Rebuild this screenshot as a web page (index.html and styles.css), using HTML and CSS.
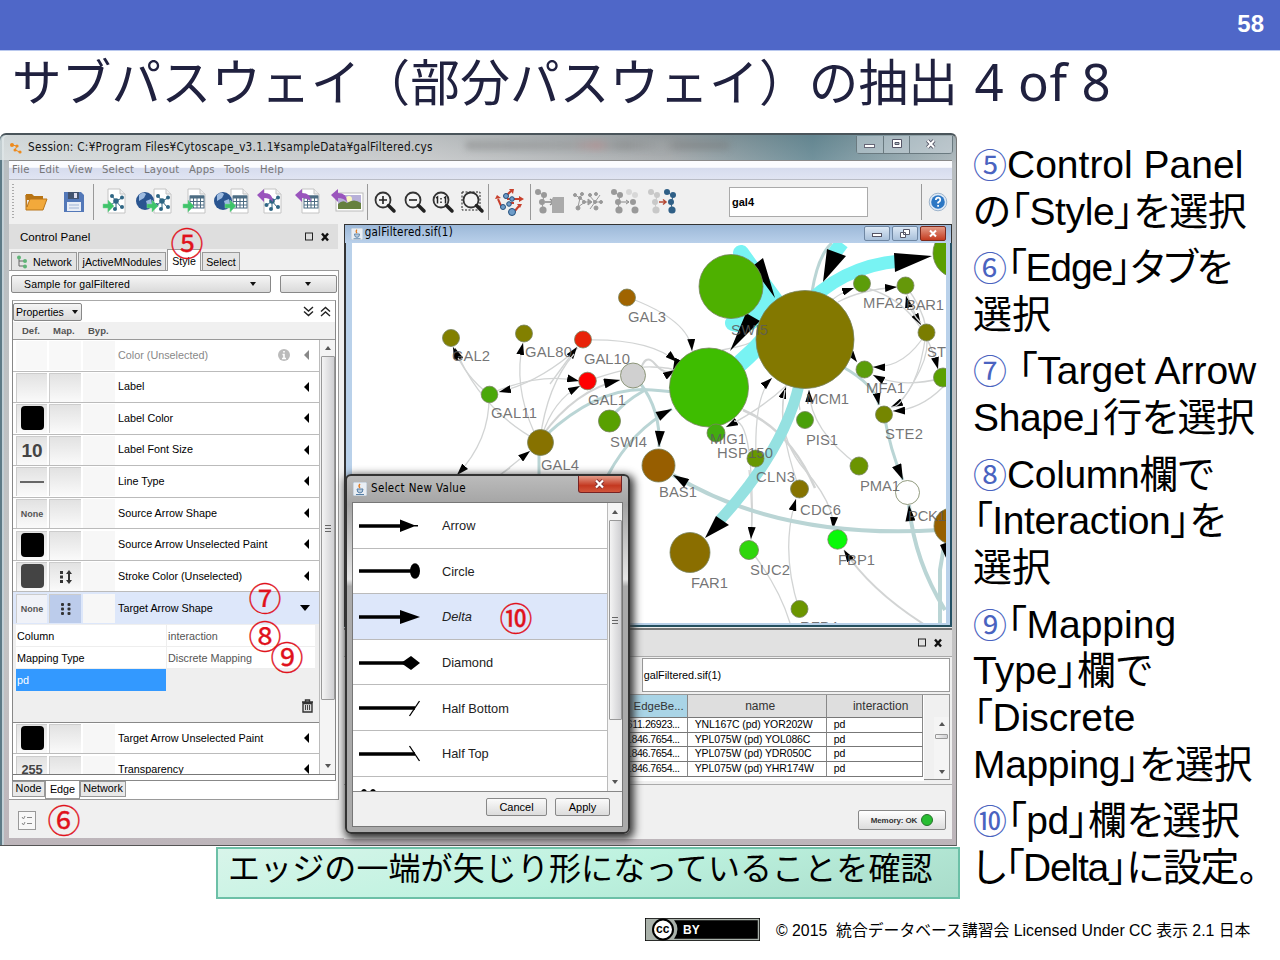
FILE: index.html
```html
<!DOCTYPE html>
<html lang="ja">
<head>
<meta charset="utf-8">
<title>サブパスウェイの抽出</title>
<link rel="stylesheet" href="styles.css">
</head>
<body>
<header class="band">58</header>
<h1 class="title">サブパスウェイ（部分パスウェイ）の抽出 <span class="latin">4 of 8</span></h1>
<main class="content">
<div class="left">
<section class="app">
  <div class="titlebar">
    <svg class="logo" width="14" height="14" viewBox="0 0 14 14"><g fill="#ee8a1c"><circle cx="3" cy="4" r="2"/><circle cx="8" cy="5" r="1.6"/><circle cx="6" cy="9" r="1.5"/><circle cx="11" cy="11" r="1.6"/></g><path d="M3 4l5 1-2 4 5 2" stroke="#ee8a1c" fill="none"/></svg>
    <span class="session">Session: C:¥Program Files¥Cytoscape_v3.1.1¥sampleData¥galFiltered.cys</span>
    <span class="ghost"></span>
    <div class="wbtns"><i><svg width="14" height="12"><rect x="1.500" y="6.500" width="10" height="3" fill="#fff" stroke="#667"/></svg></i><i><svg width="12" height="12"><path d="M1.500 1.500h9v8h-9zM4 4.500h4v2H4z" fill="#fff" stroke="#556" fill-rule="evenodd"/></svg></i><i><svg width="12" height="12"><path d="M2.500 2.500l6.500 7M9 2.500l-6.500 7" stroke="#556" stroke-width="4"/><path d="M2.500 2.500l6.500 7M9 2.500l-6.500 7" stroke="#fff" stroke-width="2"/></svg></i></div>
  </div>
  <nav class="menu"><span>File</span><span>Edit</span><span>View</span><span>Select</span><span>Layout</span><span>Apps</span><span>Tools</span><span>Help</span></nav>
  <svg class="defs" width="0" height="0">
    <defs>
      <g id="page"><path d="M8 1h12l5 5v19H8z" fill="#fff" stroke="#c4c4c4"/><path d="M20 1v5h5" fill="#eee" stroke="#c4c4c4"/></g>
      <g id="net"><path d="M16 13L12 8M16 13l6-3M16 13l-5 4M16 13l5 6M16 13v7" stroke="#2f6684"/><g fill="#2f6684"><circle cx="16" cy="13" r="2.800"/><circle cx="12" cy="8" r="2"/><circle cx="22" cy="9.500" r="2"/><circle cx="10.500" cy="17" r="2"/><circle cx="22" cy="19" r="2"/><circle cx="15" cy="21" r="2"/></g></g>
      <g id="grid"><rect x="10" y="8" width="14" height="12" fill="#fff" stroke="#4d6d83"/><path d="M10 9h14" stroke="#4d6d83" stroke-width="3"/><path d="M10 13.500h14M10 17h14M13.500 9v11M17 9v11M20.500 9v11" stroke="#4d6d83"/></g>
      <g id="garrow"><path d="M3 16h5v-4l6 6-6 6v-4H3z" fill="#3fc46a" stroke="#7fd79a" stroke-width=".5"/></g>
      <g id="globe"><circle cx="9" cy="12" r="9" fill="#2a5590"/><path d="M3 6q4-4 7-1l-2 4-5 3zM10 12l5-2 1 5-4 4z" fill="#9dbbe0"/></g>
      <g id="parrow"><path d="M1 7l7-6v4q9 0 9 9-3-4-9-4v4z" fill="#9a55bd"/></g>
      <g id="lens"><circle cx="10" cy="10" r="7.500" fill="#f4f4f4" stroke="#333" stroke-width="1.800"/><path d="M15.500 15.500l5.500 5.500" stroke="#222" stroke-width="3.500" stroke-linecap="round"/></g>
      <g id="tree"><path d="M4 4l6 4-2 8 2 7" stroke="currentColor" fill="none"/><g fill="currentColor"><circle cx="4" cy="4" r="3"/><circle cx="10" cy="7" r="3"/><circle cx="8" cy="14" r="3"/><circle cx="9" cy="22" r="3.600"/></g></g>
      <g id="java"><rect width="14" height="14" rx="1" fill="#e9eef4" stroke="#9ab" stroke-width=".7"/><path d="M4 7h6q0 4-3 4T4 7zM3 12.500h8" stroke="#567fa6" fill="#b9cbdc"/><path d="M7 6q-2-2 0-4" stroke="#e2791c" fill="none" stroke-width="1.300"/></g>
      <marker id="ar" viewBox="0 0 12 8" refX="12" refY="4" markerWidth="12" markerHeight="8" markerUnits="userSpaceOnUse" orient="auto"><path d="M0 0l12 4-12 4z"/></marker>
      <marker id="arL" viewBox="0 0 16 10" refX="16" refY="5" markerWidth="17" markerHeight="10" markerUnits="userSpaceOnUse" orient="auto"><path d="M0 0l16 5-16 5z"/></marker>
    </defs>
  </svg>
  <div class="toolbar">
    <b class="grip"></b>
    <b><svg width="24" height="22"><path d="M2 3h6l2 2h9v4H2z" fill="#b87413"/><path d="M2 19V4l1 12L6 8h17l-4 11z" fill="#f2a93b" stroke="#b9761c"/></svg></b>
    <b class="sep"><svg width="24" height="24"><path d="M2 2h17l3 3v17H2z" fill="#5378b8"/><rect x="6" y="2" width="11" height="7" fill="#42536f"/><rect x="12" y="3" width="3" height="5" fill="#dde"/><rect x="5" y="12" width="14" height="9" fill="#e8edf6"/><path d="M7 15h10M7 18h10" stroke="#9fb3d4"/></svg></b>
    <b><svg width="28" height="28"><use href="#page"/><use href="#net"/><use href="#garrow"/></svg></b>
    <b><svg width="37" height="28"><g transform="translate(10)"><use href="#page"/><use href="#net"/></g><use href="#globe" y="1"/><use href="#garrow" x="8"/></svg></b>
    <b><svg width="28" height="28"><use href="#page"/><use href="#grid"/><use href="#garrow"/></svg></b>
    <b><svg width="36" height="28"><g transform="translate(9)"><use href="#page"/><use href="#grid"/></g><use href="#globe" y="1"/><use href="#garrow" x="8"/></svg></b>
    <b><svg width="28" height="28"><use href="#page"/><use href="#net"/><use href="#parrow"/></svg></b>
    <b><svg width="28" height="28"><use href="#page"/><use href="#grid"/><use href="#parrow"/></svg></b>
    <b class="sep"><svg width="34" height="28"><rect x="6" y="5" width="27" height="18" fill="#fff" stroke="#bbb"/><rect x="8" y="7" width="23" height="14" fill="#b7b0d8"/><circle cx="19" cy="11" r="3" fill="#fbf8c0"/><path d="M8 16q5-5 9-1 7-5 14 0v6H8z" fill="#66803f"/><use href="#parrow"/></svg></b>
    <b><svg width="24" height="24"><use href="#lens"/><path d="M6 10h8M10 6v8" stroke="#222" stroke-width="1.600"/></svg></b>
    <b><svg width="24" height="24"><use href="#lens"/><path d="M6 10h8" stroke="#222" stroke-width="1.600"/></svg></b>
    <b><svg width="24" height="24"><use href="#lens"/><path d="M5 8l1.500-1v6.500M13 8l1.500-1v6.500M10 8v1.500M10 11.500V13" stroke="#222" stroke-width="1.500" fill="none"/></svg></b>
    <b class="sep"><svg width="26" height="24"><rect x="2" y="2" width="18" height="18" fill="none" stroke="#222" stroke-dasharray="2 1.500"/><use href="#lens" x="1"/></svg></b>
    <b class="sep"><svg width="30" height="30"><g stroke="#c8402c" stroke-width="2" fill="#c8402c"><path d="M11 9l5-5M12 12h13M7 21L3 12M19 25l5-6M13 16h6"/><path d="M14 2l5 0-1 5zM24 9l5 3-5 3zM0 12l2-4 4 3zM22 17l5 0-2 4z" stroke="none"/></g><g fill="#6e9cc8" stroke="#24507d"><circle cx="11" cy="9" r="2.500"/><circle cx="17" cy="12" r="2.300"/><circle cx="8" cy="20" r="2.500"/><circle cx="14" cy="17" r="2.300"/><circle cx="17" cy="25" r="3.500"/></g></svg></b>
    <b class="dim"><svg width="32" height="28"><use href="#tree"/><path d="M11 14h8M16 11l4 3-4 3" stroke="#888" fill="none" stroke-width="1.500"/><path d="M19 9h11v16H18V11z" fill="#aaa"/></svg></b>
    <b class="dim"><svg width="30" height="24" fill="#999" stroke="#999"><path d="M2 5l5 3-2 9M9 4L7 8l5 4-7 5M16 5l6 7 5-7M17 19l5-7h5M11 12h7" fill="none"/><path d="M15 9l4 3-4 3z"/><circle cx="2" cy="5" r="1.500"/><circle cx="9" cy="4" r="1.500"/><circle cx="7" cy="8" r="1.500"/><circle cx="5" cy="18" r="2"/><circle cx="11" cy="12" r="1.500"/><circle cx="22" cy="12" r="1.500"/><circle cx="17" cy="5" r="1.500"/><circle cx="23" cy="4" r="1.500"/><circle cx="23" cy="18" r="2"/><circle cx="28" cy="12" r="1.500"/></svg></b>
    <b class="dim"><svg width="30" height="28"><use href="#tree"/><path d="M11 14h7M16 12l3 2-3 2" stroke="#888" fill="none"/><g opacity=".45"><circle cx="19" cy="4" r="3" fill="#bbb"/><circle cx="25" cy="7" r="3" fill="#bbb"/></g><g fill="#999"><circle cx="23" cy="14" r="3"/><circle cx="25" cy="22" r="3.500"/></g></svg></b>
    <b class="dim"><svg width="30" height="28"><use href="#tree" opacity=".45"/><g transform="translate(16)" color="#2f5f86"><use href="#tree"/></g><path d="M12 14h6M16 11.500l3 2.500-3 2.500" stroke="#b54a34" fill="none" stroke-width="1.500"/></svg></b>
    <b></b>
    <div class="search">gal4</div>
    <b class="sep"></b>
    <b><svg width="20" height="20"><circle cx="10" cy="10" r="8.800" fill="#dfeaf6" stroke="#9db4cc"/><circle cx="10" cy="10" r="6.800" fill="#2c77c4"/><path d="M7.800 8q.2-2.300 2.300-2.300T12.300 8q0 1.300-2.200 2.600v1M10.100 13v1.700" stroke="#fff" stroke-width="1.700" fill="none"/></svg></b>
  </div>
  <div class="body">
    <aside class="cp">
      <div class="cphead"><span>Control Panel</span><em><svg width="26" height="10"><rect x="1.500" y="1" width="7" height="7" fill="none" stroke="#222"/><path d="M18 1.500l6 7M24 1.500l-6 7" stroke="#111" stroke-width="2.400"/></svg></em></div>
      <div class="tabs"><span class="t1"><svg width="13" height="14"><path d="M3 2v9h6M3 6h6" stroke="#666" fill="none"/><g fill="#5fb477"><circle cx="3" cy="2.500" r="2"/><circle cx="9" cy="6" r="2"/><circle cx="9" cy="11.500" r="2"/></g></svg>Network</span><span class="t2">jActiveMNodules</span><span class="t3">Style</span><span class="t4">Select</span></div>
      <div class="cpbody">
        <div class="combos"><span class="combo c1">Sample for galFiltered<i></i></span><span class="combo c2"><i></i></span></div>
        <div class="box">
          <div class="props"><span class="combo c3">Properties<i></i></span><svg width="28" height="12"><path d="M1 1l4.500 4L10 1M1 5.500l4.500 4L10 5.500M18 5.500l4.500-4 4.500 4M18 10l4.500-4 4.500 4" stroke="#222" stroke-width="1.400" fill="none"/></svg></div>
          <div class="cols"><span>Def.</span><span>Map.</span><span>Byp.</span></div>
          <div class="listwrap">
            <div class="list">
              <div class="row off"><b></b><b></b><b></b><span>Color (Unselected)</span><svg width="14" height="14"><circle cx="7" cy="7" r="6" fill="#bbb"/><path d="M7 3v1.600M5.500 6.500H7V10M5 10.500h4" stroke="#fff" stroke-width="1.600" fill="none"/></svg><i></i></div>
              <div class="row"><b></b><b></b><b></b><span>Label</span><i></i></div>
              <div class="row"><b><u></u></b><b></b><b></b><span>Label Color</span><i></i></div>
              <div class="row"><b class="num">10</b><b></b><b></b><span>Label Font Size</span><i></i></div>
              <div class="row"><b><s></s></b><b></b><b></b><span>Line Type</span><i></i></div>
              <div class="row"><b class="none">None</b><b></b><b></b><span>Source Arrow Shape</span><i></i></div>
              <div class="row"><b><u></u></b><b></b><b></b><span>Source Arrow Unselected Paint</span><i></i></div>
              <div class="row"><b><u class="grey"></u></b><b><svg width="16" height="14" fill="#333"><rect x="2" y="1" width="3" height="3"/><rect x="2" y="5.500" width="3" height="3"/><rect x="2" y="10" width="3" height="3"/><path d="M8 4l3-4 3 4h-2v6h2l-3 4-3-4h2V4z"/></svg></b><b></b><span>Stroke Color (Unselected)</span><i></i></div>
              <div class="row sel"><b class="none">None</b><b><svg width="12" height="14" fill="#333"><rect x="1" y="1" width="3" height="3" rx="1"/><rect x="1" y="5.500" width="3" height="3" rx="1"/><rect x="1" y="10" width="3" height="3" rx="1"/><rect x="7.500" y="1" width="3" height="3" rx="1"/><rect x="7.500" y="5.500" width="3" height="3" rx="1"/><rect x="7.500" y="10" width="3" height="3" rx="1"/></svg></b><b></b><span>Target Arrow Shape</span><i></i></div>
              <div class="mapping">
                <div class="mrow"><span>Column</span><span>interaction</span></div>
                <div class="mrow"><span>Mapping Type</span><span>Discrete Mapping</span></div>
                <div class="pd">pd</div>
                <svg class="trash" width="13" height="14"><path d="M1 3h11M4.500 3V1h4v2M2 4.500h9V13H2z" stroke="#333" fill="#ddd" stroke-width="1.400"/><path d="M4.500 6v5M6.500 6v5M8.500 6v5" stroke="#444"/></svg>
              </div>
              <div class="row"><b><u></u></b><b></b><b></b><span>Target Arrow Unselected Paint</span><i></i></div>
              <div class="row"><b class="num n2">255</b><b></b><b></b><span>Transparency</span><i></i></div>
            </div>
            <div class="sb sb1"><i class="up"></i><div></div><i class="dn"></i></div>
          </div>
        </div>
        <div class="btabs"><span>Node</span><span class="on">Edge</span><span>Network</span></div>
      </div>
      <div class="cpfoot"><svg width="19" height="20"><rect x=".5" y=".5" width="17" height="18" fill="#f8f8f8" stroke="#999"/><path d="M4 6l1.500 2L7 5M9 6.500h5M4 12l1.500 2L7 11M9 12.500h5" stroke="#888" fill="none"/></svg></div>
    </aside>
    <div class="right">
      <div class="nethead"><svg width="12" height="12" viewBox="0 0 14 14"><use href="#java"/></svg><span>galFiltered.sif(1)</span>
        <div class="nb"><i><svg width="12" height="10"><rect x="1.500" y="5.500" width="9" height="3" fill="#fff" stroke="#556"/></svg></i><i><svg width="12" height="11"><path d="M4.500 1.500h6v5h-6zM1.500 4.500h5v5h-5z" fill="#fff" stroke="#556"/></svg></i><i class="red"><svg width="10" height="9"><path d="M2 1.500l6 6M8 1.500l-6 6" stroke="#fff" stroke-width="2"/></svg></i></div></div>
      <div class="netframe">
      <svg class="network" width="594" height="380" viewBox="352 243 594 380">
        <g fill="none" stroke="#d2d4d4" stroke-width="1.300">
          <path d="M540 442Q480 410 455 348" marker-end="url(#ar)"/>
          <path d="M489 394Q466 378 453 347" marker-end="url(#ar)"/>
          <path d="M489 396Q490 440 457 475" marker-end="url(#ar)"/>
          <path d="M489 394Q540 372 579 381" marker-end="url(#ar)"/>
          <path d="M578 348Q540 382 499 392" marker-end="url(#ar)"/>
          <path d="M550 384Q566 362 577 347" marker-end="url(#ar)"/>
          <path d="M534 432Q513 385 523 343" marker-end="url(#ar)"/>
          <path d="M540 440Q547 385 574 354"/>
          <path d="M542 436Q553 400 580 386" marker-end="url(#ar)"/>
          <path d="M542 436Q575 390 620 380" marker-end="url(#arL)" stroke-width="2"/>
          <path d="M500 475L530 451" marker-end="url(#ar)"/>
          <path d="M478 490L510 468"/>
          <path d="M583 340Q650 338 677 362" marker-end="url(#ar)"/>
          <path d="M588 381Q630 366 652 367T673 370" marker-end="url(#ar)"/>
          <path d="M627 297Q690 320 692 351" marker-end="url(#ar)"/>
          <path d="M640 372q5-20 15-8t20 6" marker-end="url(#ar)" stroke-width="2"/>
          <path d="M722 350Q750 345 757 339"/>
          <path d="M862 287Q920 300 938 369" marker-end="url(#ar)"/>
          <path d="M905 288Q912 310 921 325" marker-end="url(#ar)"/>
          <path d="M921 323Q910 312 906 296" marker-end="url(#ar)"/>
          <path d="M832 300Q842 292 854 288" marker-end="url(#ar)"/>
          <path d="M838 302Q860 290 897 287" marker-end="url(#ar)"/>
          <path d="M926 333Q905 368 873 367" marker-end="url(#ar)"/>
          <path d="M943 378Q900 389 873 375" marker-end="url(#ar)"/>
          <path d="M926 333Q918 395 891 407" marker-end="url(#ar)"/>
          <path d="M943 387Q920 410 893 411" marker-end="url(#ar)"/>
          <path d="M905 285Q940 330 920 370T891 407"/>
          <path d="M848 350L857 362" marker-end="url(#ar)"/>
          <path d="M756 458Q754 395 772 378" marker-end="url(#ar)"/>
          <path d="M800 410Q798 402 800 388"/>
          <path d="M859 466Q810 430 809 390" marker-end="url(#ar)"/>
          <path d="M799 488Q775 420 786 387" marker-end="url(#ar)"/>
          <path d="M787 385Q760 410 726 427" marker-end="url(#ar)"/>
          <path d="M751 540Q754 500 750 460T734 421" />
          <path d="M749 470Q753 505 751 539" marker-end="url(#ar)"/>
          <path d="M785 390Q775 435 805 470T833 529" marker-end="url(#ar)"/>
          <path d="M799 609Q780 550 796 499" marker-end="url(#ar)"/>
          <path d="M755 556Q780 590 790 623"/>
          <path d="M925 625Q870 590 844 550" marker-end="url(#ar)" stroke-width="2"/>
          <path d="M743 410Q790 430 815 488" stroke-width="2.500"/>
        </g>
        <g fill="none" stroke="#bad5d5" stroke-width="3">
          <path d="M545 436Q600 385 652 390T669 387" marker-end="url(#arL)"/>
          <path d="M609 420Q622 403 645 390"/>
          <path d="M640 383Q661 410 659 447" marker-end="url(#arL)"/>
          <path d="M608 475Q632 430 672 409" marker-end="url(#arL)"/>
          <path d="M539 455V476"/>
          <path d="M843 367Q875 385 879 405" marker-end="url(#ar)"/>
          <path d="M884 414Q890 450 903 480" marker-end="url(#arL)"/>
          <path d="M940 530Q780 540 673 475" stroke-width="4" marker-end="url(#arL)"/>
          <path d="M945 610Q914 560 909 505" stroke-width="4" marker-end="url(#arL)"/>
          <path d="M940 623V570L944 546" stroke-width="4"/>
          <path d="M812 292Q818 255 832 243"/>
        </g>
        <g fill="none" stroke="#78f3f3">
          <path d="M741 253L775 300" stroke-width="16" stroke-linecap="round"/>
          <path d="M737 366Q767 340 790 308" stroke-width="17"/>
          <path d="M733 323Q753 330 767 301" stroke-width="16" stroke-linecap="round"/>
          <path d="M800 311Q840 266 900 261" stroke-width="13"/>
          <path d="M833 255L842 243" stroke-width="14"/>
          <path d="M799 385Q784 450 720 520" stroke="#95e1e1" stroke-width="11"/>
        </g>
        <path d="M763 258l12 40-16-22-5-11zM827 249l19 7-23 26zM894 253l38 3-37 16zM760 321l-30 30 16-38zM716 516l13 9-24 13zM940 545l8-3v20z"/>
        <g stroke="#77835f" stroke-width=".8">
          <circle cx="627" cy="297.500" r="8.500" fill="#a06400"/><circle cx="451" cy="338" r="8.500" fill="#828000"/><circle cx="524" cy="333.500" r="8.500" fill="#828000"/><circle cx="583" cy="339.500" r="8.500" fill="#e82408"/><circle cx="587.500" cy="381" r="8.800" fill="#f00"/><circle cx="633" cy="375.500" r="12.500" fill="#d0d0d0"/><circle cx="489.500" cy="394.500" r="8.300" fill="#4ba80a"/><circle cx="540.500" cy="442.500" r="13" fill="#877200"/><circle cx="609.500" cy="421" r="11" fill="#58a000"/><circle cx="658.500" cy="465.500" r="16.500" fill="#975e00"/><circle cx="731" cy="286.500" r="32" fill="#4eb000"/><circle cx="805" cy="339.500" r="49" fill="#837800"/><circle cx="709" cy="387.500" r="39.500" fill="#3ebd00"/><circle cx="716" cy="433" r="9" fill="#42ad0e"/><circle cx="755.500" cy="458.500" r="8.500" fill="#679800"/><circle cx="805" cy="420" r="8.500" fill="#4a9f0a"/><circle cx="859" cy="466" r="9" fill="#6b9400"/><circle cx="862" cy="283.500" r="8.500" fill="#5c9d0a"/><circle cx="905.500" cy="285.500" r="8.500" fill="#65980a"/><circle cx="926.500" cy="332.500" r="8.500" fill="#7a7d00"/><circle cx="943" cy="377.500" r="9.500" fill="#5aa000"/><circle cx="864.500" cy="369.500" r="8.500" fill="#5c9d0a"/><circle cx="884" cy="414.500" r="8.500" fill="#758600"/><circle cx="958" cy="253" r="25" fill="#5a9f00"/><circle cx="799.500" cy="489" r="9" fill="#857300"/><circle cx="749" cy="550" r="9.500" fill="#30d60c"/><circle cx="837.500" cy="539.500" r="9.700" fill="#09f909"/><circle cx="690" cy="552.500" r="20" fill="#8a6e00"/><circle cx="907.500" cy="492.500" r="12" fill="#fff"/><circle cx="952" cy="526" r="18" fill="#966000"/><circle cx="799.500" cy="609" r="8.500" fill="#6b9500"/>
        </g>
        <g class="nl">
          <text x="452" y="361" textLength="38">GAL2</text><text x="525" y="357" textLength="47">GAL80</text><text x="584" y="364" textLength="46">GAL10</text><text x="588" y="405" textLength="38">GAL1</text><text x="491" y="418" textLength="46">GAL11</text><text x="541" y="470" textLength="38">GAL4</text><text x="628" y="322" textLength="38">GAL3</text><text x="610" y="447" textLength="37">SWI4</text><text x="731" y="335" textLength="37">SWI5</text><text x="806" y="404" textLength="43">MCM1</text><text x="863" y="308" textLength="40">MFA2</text><text x="906" y="310" textLength="38">BAR1</text><text x="927" y="357" textLength="19">ST</text><text x="866" y="393" textLength="39">MFA1</text><text x="885" y="439" textLength="38">STE2</text><text x="806" y="445" textLength="32">PIS1</text><text x="710" y="444" textLength="36">MIG1</text><text x="717" y="458" textLength="56">HSP150</text><text x="756" y="482" textLength="39">CLN3</text><text x="860" y="491" textLength="40">PMA1</text><text x="659" y="497" textLength="38">BAS1</text><text x="800" y="515" textLength="41">CDC6</text><text x="691" y="588" textLength="37">FAR1</text><text x="750" y="575" textLength="40">SUC2</text><text x="838" y="565" textLength="37">FBP1</text><text x="908" y="521" textLength="38">PCK1</text><text x="800" y="631.500" textLength="38">RFP4</text>
        </g>
      </svg>
      </div>
      <div class="table">
        <div class="thead0"><svg width="26" height="10"><rect x="1.500" y="1" width="7" height="7" fill="none" stroke="#222"/><path d="M18 1.500l6 7M24 1.500l-6 7" stroke="#111" stroke-width="2.400"/></svg></div>
        <div class="pick"><span>galFiltered.sif(1)</span></div>
        <div class="grid">
          <div class="g">
            <div class="gr gh"><span class="blue">EdgeBe...</span><span>name</span><span>interaction</span></div>
            <div class="gr"><span>611.26923...</span><span>YNL167C (pd) YOR202W</span><span>pd</span></div>
            <div class="gr"><span>1846.7654...</span><span>YPL075W (pd) YOL086C</span><span>pd</span></div>
            <div class="gr"><span>1846.7654...</span><span>YPL075W (pd) YDR050C</span><span>pd</span></div>
            <div class="gr"><span>1846.7654...</span><span>YPL075W (pd) YHR174W</span><span>pd</span></div>
          </div>
          <div class="sb sb2"><i class="up"></i><div></div><i class="dn"></i></div>
        </div>
        <div class="status"><span class="mem">Memory: OK<i></i></span></div>
      </div>
    </div>
  </div>

  <div class="dialog">
    <div class="dhead"><svg width="14" height="14"><use href="#java"/></svg><span>Select New Value</span><i><svg width="12" height="10"><path d="M2 1.500l7 7M9 1.500l-7 7" stroke="#833" stroke-width="4"/><path d="M2 1.500l7 7M9 1.500l-7 7" stroke="#fff" stroke-width="2.200"/></svg></i></div>
    <div class="dbody">
      <div class="dlist">
        <div class="ditems">
          <div class="di"><svg width="64" height="18"><path d="M0 9h42" stroke="#000" stroke-width="3.500"/><path d="M41 2.500l14 5.500h4v1.500h-4L41 15z"/></svg>Arrow</div>
          <div class="di"><svg width="64" height="18"><path d="M0 9h54" stroke="#000" stroke-width="3.500"/><ellipse cx="56" cy="9" rx="5" ry="7.700"/></svg>Circle</div>
          <div class="di on"><svg width="64" height="18"><path d="M0 9h42" stroke="#000" stroke-width="3.500"/><path d="M41 2l20 7-20 7z"/></svg>Delta</div>
          <div class="di"><svg width="64" height="18"><path d="M0 9h46" stroke="#000" stroke-width="3.500"/><path d="M42 9l10-7 9 7-9 7z"/></svg>Diamond</div>
          <div class="di"><svg width="64" height="18"><path d="M0 9h56" stroke="#000" stroke-width="3.500"/><path d="M60.500 2l-10 15" stroke="#000" stroke-width="1.300"/></svg>Half Bottom</div>
          <div class="di"><svg width="64" height="18"><path d="M0 9h56" stroke="#000" stroke-width="3.500"/><path d="M50.500 1l10 15" stroke="#000" stroke-width="1.300"/></svg>Half Top</div>
          <div class="di last"><svg width="64" height="4"><path d="M3 3.500q2-3 4 0M12 3.500q2-3 4 0" stroke="#000" stroke-width="2" fill="none"/></svg></div>
        </div>
        <div class="sb sb3"><i class="up"></i><div></div><i class="dn"></i></div>
      </div>
      <div class="dbtns"><span class="bc">Cancel</span><span class="ba">Apply</span></div>
    </div>
  </div>

  <span class="mark m5">⑤</span><span class="mark m6">⑥</span><span class="mark m7">⑦</span><span class="mark m8">⑧</span><span class="mark m9">⑨</span><span class="mark m10">⑩</span>
</section>
<div class="note">エッジの一端が矢じり形になっていることを確認</div>
</div>
<div class="steps">
  <p><b>⑤</b>Control Panel<br><span class="tight">の「Style」を選択</span></p>
  <p><b>⑥</b><span class="tighter">「Edge」タブを</span><br>選択</p>
  <p><b>⑦</b> 「Target Arrow<br><span class="tight">Shape」行を選択</span></p>
  <p><b>⑧</b><span class="tight">Column欄で</span><br><span class="tight">「Interaction」を</span><br>選択</p>
  <p><b>⑨</b>「Mapping<br><span>Type」欄で</span><br>「Discrete<br><span class="tight">Mapping」を選択</span></p>
  <p><b>⑩</b><span class="tight">「pd」欄を選択</span><br><span class="tightest">し「Delta」に設定。</span></p>
</div>
</main>
<footer class="foot">
  <svg width="115" height="23"><rect width="115" height="23" fill="#000"/><rect x="1.500" y="1.500" width="112" height="20" fill="#000" stroke="#aab2ab" stroke-width="1.500"/><path d="M2 2h27q7 9 0 19H2z" fill="#aab2ab"/><circle cx="18" cy="11.500" r="10" fill="#fff" stroke="#000" stroke-width="2"/><text x="11" y="15" class="cc">cc</text><text x="38" y="16" class="by">BY</text></svg>
  <span>© 2015&nbsp; 統合データベース講習会 Licensed Under CC 表示 2.1 日本</span>
</footer>
</body>
</html>
```

FILE: styles.css
```css
* { box-sizing: border-box; }
body { margin: 0; width: 1280px; height: 960px; overflow: hidden; background: #fff; font-family: "Liberation Sans", "Noto Sans CJK JP", sans-serif; color: #000; }
svg { display: block; flex: none; }
i, em { font-style: normal; }
.band { height: 51px; background: #4f67c8; color: #fff; font-weight: bold; font-size: 24px; line-height: 48px; text-align: right; padding-right: 16px; border-bottom: 1px solid #b9c8ee; }
.title { margin: 0; height: 82px; padding-left: 12px; font: 400 49.6px/57px "Noto Sans CJK JP", sans-serif; letter-spacing: .2px; color: #20213f; white-space: nowrap; }
.latin { font-family: "Noto Sans", sans-serif; font-size: 51px; font-weight: 400; letter-spacing: .6px; margin-left: 5px; }
.content { display: flex; height: 766px; }
.left { width: 960px; }

.app { position: relative; width: 957px; height: 713px; padding: 0 4px 0 9px; background: linear-gradient(#8d979b, #b9bec1 4%, #c4c4c4 70%, #bdb5ba); border-top: 2px solid #4a555b; border-right: 1px solid #777; border-bottom: 1px solid #555; border-radius: 6px 6px 0 0; box-shadow: inset 2px 0 0 #5d7a86, inset 4px 0 0 #c3d0d6; }
.titlebar { display: flex; height: 25px; margin: 0 -4px 0 -9px; padding-left: 9px; align-items: center; font: 11.7px "DejaVu Sans"; font-stretch: condensed; color: #111; background: linear-gradient(90deg, rgba(230,235,235,.75), rgba(215,215,215,.6) 45%, rgba(150,150,150,.3) 70%, rgba(70,120,135,.6) 85%, rgba(170,185,190,.6)); border-radius: 6px 6px 0 0; }
.logo { margin-right: 5px; }
.session { width: 405px; margin-top: -2px; white-space: nowrap; letter-spacing: .25px; }
.ghost { width: 265px; height: 9px; margin: -5px 0 0 32px; background: linear-gradient(90deg, #7776, #8885 40%, #b776 50%, #8885 55%, #7776 60%, #aaa3 75%, #7776 80%, #7776); filter: blur(3px); border-radius: 5px; }
.wbtns { display: flex; margin: 0 3px 6px auto; height: 18px; border: 1px solid #6a7a80; border-top: 0; border-radius: 0 0 4px 4px; }
.wbtns i { width: 26px; display: flex; align-items: center; justify-content: center; background: rgba(215,225,230,.45); }
.wbtns i + i { border-left: 1px solid #6a7a80; }
.wbtns i:last-child { width: 43px; }
.menu { display: grid; grid-template-columns: 27px 29px 34px 42px 45px 35px 36px 40px; height: 20px; padding-left: 3px; line-height: 18px; font-size: 11.2px; font-family: "DejaVu Sans"; font-stretch: condensed; color: #777; background: linear-gradient(#fbfcff 35%, #d6dcee 40%, #e0e4f2); border-top: 1px solid #8a8a8a; border-bottom: 1px solid #b9bcc6; letter-spacing: .2px; }
.defs { position: absolute; }
.toolbar { display: grid; grid-template-columns: 9px 36px 40px 40px 40px 39px 38px 38px 37px 42px 33px 27px 29px 32px 42px 38px 37px 37px 37px 49px 139px 54px 31px; height: 44px; align-items: center; background: #f0f0f0; }
.toolbar b { display: flex; align-items: center; justify-content: center; height: 36px; }
.toolbar .sep { border-right: 1px solid #999; }
.grip { width: 2px; margin-left: 3px; background: repeating-linear-gradient(#aaa 0 1px, transparent 1px 3px); }
.dim { color: #999; }
.search { height: 30px; background: #fff; border: 1px solid #aaa; font: bold 11px/29px "Liberation Sans"; padding-left: 2px; }
.body { display: flex; height: 614px; background: #f0f0f0; }
.cp { width: 331px; height: 614px; }
.cphead { display: flex; justify-content: space-between; align-items: center; height: 25px; background: #dedede; padding: 0 8px 0 11px; font-size: 11.6px; width: 329px; }
.tabs { display: flex; align-items: flex-end; height: 22px; padding-left: 2px; font-size: 10.6px; background: #f0f0f0; margin-bottom: -1px; }
.tabs span { display: flex; align-items: center; justify-content: center; height: 19px; background: #e4e4e4; border: 1px solid #999; margin-right: 1px; white-space: nowrap; }
.tabs .t1 { width: 66px; gap: 4px; } .tabs .t2 { width: 88px; }
.tabs .t3 { width: 34px; height: 22px; background: #fff; border-bottom: 0; } .tabs .t4 { width: 38px; }
.cpbody { width: 330px; height: 530px; background: #fff; border: 1px solid #999; border-left: 0; padding: 4px 1px 0 2px; }
.combos { display: flex; justify-content: space-between; margin-bottom: 7px; }
.combo { display: flex; align-items: center; height: 18px; border: 1px solid #888; border-radius: 2px; background: linear-gradient(#f5f5f5, #dadada); font-size: 10.5px; padding-left: 12px; }
.combo i { border: 3px solid transparent; border-top: 4px solid #111; border-bottom: 0; margin-left: auto; margin-right: 14px; }
.c1 { width: 260px; letter-spacing: .15px; } .c2 { width: 57px; } .c2 i { margin-right: 25px; }
.box { width: 324px; height: 481px; margin-left: 1px; border: 1px solid #888; border-top-color: #aaa; }
.props { display: flex; height: 21px; align-items: center; justify-content: space-between; padding-right: 4px; }
.c3 { width: 69px; padding-left: 2px; } .c3 i { margin-right: 3px; }
.cols { display: grid; grid-template-columns: 31px 35px 40px; height: 18px; padding-left: 9px; font: bold 9.5px/18px "Liberation Sans"; color: #555; background: #f0f0f0; border-bottom: 1px solid #999; }
.listwrap { display: flex; height: 435px; border-bottom: 1px solid #777; }
.list { width: 306px; overflow: hidden; background: #fff; }
.row { display: grid; grid-template-columns: 31px 32px 32px auto; column-gap: 2px; height: 31.55px; padding: 1px 0 0 3px; border-bottom: 1px solid #bbb; position: relative; align-items: center; font-size: 10.8px; }
.row b { height: 29px; background: linear-gradient(#e2e2e2, #fafafa); border-left: 1px solid #ccc; border-top: 1px solid #ccc; display: flex; align-items: center; justify-content: center; }
.row b:nth-child(3) { background: #f7f7f7; border: 0; }
.row span { padding-left: 1px; margin-top: -2px; white-space: nowrap; }
.row > i { position: absolute; right: 10px; top: 10px; border: 5px solid transparent; border-right: 5px solid #000; border-left: 0; }
.row > svg { position: absolute; right: 28px; top: 8px; }
.off { color: #888; } .off b { background: #f8f8f8; border: 0; } .off > i { border-right-color: #888; }
.row u { width: 23px; height: 24px; margin-top: -2px; border-radius: 4px; background: #000; } .row u.grey { background: #444; }
.row s { width: 24px; height: 2px; background: #666; }
.row .num { font-size: 19px; color: #444; } .row .n2 { font-size: 12.8px; letter-spacing: -.2px; padding-bottom: 3px; }
.row .none { font-size: 9px; color: #555; }
.sel { background: #dde7fa; border-bottom: 0; } .sel b { background: #f0f2f8; } .sel b:nth-child(2) { background: #bccceb; }
.sel > i { border: 5px solid transparent; border-top: 6px solid #000; border-bottom: 0; right: 9px; top: 13px; }
.mapping { height: 98.500px; padding: 1px 4px 0 3px; background: #efefef; border-bottom: 1px solid #888; margin-top: .5px; font-size: 10.8px; }
.mrow { display: grid; grid-template-columns: 150px 1fr; height: 22px; line-height: 22px; background: #fff; border-bottom: 1px solid #eee; }
.mrow span { padding-left: 1px; } .mrow span + span { color: #555; border-left: 1px solid #eee; padding-left: 1px; }
.pd { width: 150px; height: 22px; line-height: 22px; padding-left: 1px; background: #3399ff; color: #fff; }
.trash { margin: 8px 0 0 285px; }
.sb { display: flex; flex-direction: column; align-items: center; background: #f4f4f4; border-left: 1px solid #bbb; }
.sb div { width: 14px; border: 1px solid #999; border-radius: 1px; background: linear-gradient(90deg, #f4f4f4, #cfcfd2); display: flex; align-items: center; justify-content: center; }
.sb div::after { content: ""; width: 6px; height: 7px; background: repeating-linear-gradient(#666 0 1px, transparent 1px 3px); }
.up { border: 3px solid transparent; border-bottom: 4px solid #555; border-top: 0; }
.dn { border: 3px solid transparent; border-top: 4px solid #555; border-bottom: 0; margin-top: auto; }
.sb1 { width: 16px; padding: 6px 0; } .sb1 div { height: 344px; margin-top: 6px; }
.btabs { display: flex; margin: 0 0 0 1px; font-size: 10.8px; line-height: 13px; text-align: center; }
.btabs span { height: 16px; width: 33px; border: 1px solid #999; background: #e8e8e8; } .btabs span:last-child { width: 46px; }
.btabs .on { height: 18px; width: 35px; background: #fff; border-top: 0; line-height: 17px; }
.cpfoot { padding: 11px 0 0 9px; }

.right { width: 609px; margin-left: 4px; }
.nethead { display: flex; height: 19px; align-items: center; background: linear-gradient(#9cb8d8, #b9d0ea); border: 1px solid #333; border-bottom: 0; padding-left: 6px; font-size: 11.5px; font-family: "DejaVu Sans"; font-stretch: condensed; gap: 2px; letter-spacing: .25px; }
.nethead span { margin-top: -4px; }
.nb { display: flex; gap: 2px; margin: 0 5px 2px auto; }
.nb i { width: 26px; height: 15px; border: 1px solid #6f87a3; border-radius: 2px; display: flex; align-items: center; justify-content: center; background: linear-gradient(#dce8f5, #a8c0da); }
.nb .red { background: linear-gradient(#e39a86, #c43c20); border-color: #7c2a1d; }
.netframe { height: 384px; border-left: 2px solid #333; border-right: 2px solid #245064; border-bottom: 2px solid #24505f; background: #b9d1ea; padding-left: 6px; }
.network { background: #fff; }
.nl { font-size: 14.8px; fill: #5c5c5c; fill-opacity: .85; }
.table { height: 211px; border-top: 2px solid #777; margin-top: 1px; background: #f0f0f0; }
.thead0 { height: 27px; background: #e1e1e1; display: flex; justify-content: flex-end; align-items: center; padding-right: 9px; border-bottom: 1px solid #aaa; }
.pick { height: 34px; margin: 1px 2px 0 298px; border: 1px solid #999; background: #fff; font-size: 10.8px; line-height: 32px; padding-left: 1px; }
.grid { display: flex; height: 86px; margin: 2px 2px 0 8px; border: 1px solid #999; border-bottom: 1px solid #888; justify-content: space-between; }
.g { width: 571px; background: #fff; height: 86px; }
.gr { display: grid; grid-template-columns: 335px 139px 96px; height: 14.7px; line-height: 13px; font-size: 10.5px; white-space: nowrap; }
.gr span { border-right: 1px solid #888; border-bottom: 1px solid #777; padding-left: 7px; letter-spacing: -.1px; }
.gr:not(.gh) span:first-child { text-align: right; padding-right: 7px; letter-spacing: -.4px; }
.gh { height: 23px; line-height: 22px; font-size: 12px; text-align: center; color: #333; }
.gh span { background: #dedede; letter-spacing: 0; } .gh span:last-child { padding-left: 13px; } .gh .blue { background: #a9d4e6; text-align: right; padding-right: 3px; font-size: 11.4px; }
.sb2 { width: 15px; margin-top: 22px; padding: 5px 0; border: 0; } .sb2 div { height: 5px; width: 13px; margin-top: 8px; } .sb2 div::after { display: none; }
.status { border-top: 1px solid #aaa; margin-top: 4px; padding: 25px 6px 0; display: flex; justify-content: flex-end; }
.mem { display: flex; align-items: center; justify-content: center; gap: 4px; width: 88px; height: 20px; border: 1px solid #888; border-radius: 2px; background: linear-gradient(#fff, #ddd); font-size: 8px; font-weight: bold; letter-spacing: -.1px; color: #333; }
.mem i { width: 12px; height: 12px; border-radius: 50%; background: #28bd32; border: 1px solid #26722b; }

.dialog { position: absolute; left: 345px; top: 339px; width: 285px; height: 360px; padding: 0 6px 7px; border: 2px solid #333; border-radius: 6px; background: linear-gradient(#bbb, #a4a4a4 8%, #e6e6e6 29%, #aaa 31%, #aaa); box-shadow: 2px 3px 9px 2px #333; }
.dhead { display: flex; align-items: center; height: 26px; font: 11.5px "DejaVu Sans"; font-stretch: condensed; gap: 5px; letter-spacing: .35px; }
.dhead span { margin: -2px 0 0 -1px; }
.dhead i { width: 44px; height: 17px; margin: -1px 0 8px auto; background: linear-gradient(#e39b88, #c43820 60%, #d2553b); border: 1px solid #722; border-top: 0; border-radius: 0 0 3px 3px; display: flex; justify-content: center; align-items: center; }
.dbody { height: 325px; width: 271px; margin-left: -1px; background: #f0f0f0; border: 1px solid #777; }
.dlist { display: flex; height: 289px; border-bottom: 1px solid #888; }
.ditems { width: 254px; height: 288px; overflow: hidden; background: #fff; }
.di { display: flex; align-items: center; height: 45.600px; padding-left: 6px; gap: 19px; border-bottom: 1px solid #bbb; font-size: 12.800px; color: #222; padding-top: 1px; }
.di.on { background: #dde7fa; font-style: italic; }
.di.last { align-items: flex-start; border: 0; padding-top: 11px; }
.sb3 { flex: 1; padding: 7px 0; } .sb3 div { height: 200px; width: 13px; margin-top: 6px; }
.dbtns { display: flex; justify-content: flex-end; gap: 8px; padding: 6px 12px; font-size: 11px; text-align: center; }
.dbtns span { height: 18px; line-height: 16px; border: 1px solid #888; border-radius: 2px; background: linear-gradient(#fafafa, #dcdcdc); }
.bc { width: 61px; } .ba { width: 55px; }

.mark { position: absolute; width: 40px; text-align: center; font: 33px/36px "Noto Sans CJK JP", sans-serif; color: #e0121c; -webkit-text-stroke: .3px #e0121c; }
.m5 { left: 167px; top: 89px; } .m6 { left: 44px; top: 666px; } .m7 { left: 245px; top: 444px; } .m8 { left: 245px; top: 482px; } .m9 { left: 267px; top: 503px; } .m10 { left: 496px; top: 464px; }

.note { position: relative; width: 744px; height: 52px; margin: 1px 0 0 216px; padding-left: 10px; border: 2px solid #6cc0a7; background: linear-gradient(165deg, #d8f5ea, #bdf2df 50%, #a9dcca); font: 400 32px/34px "Noto Sans CJK JP", sans-serif; letter-spacing: .1px; white-space: nowrap; }
.steps { padding: 9px 0 0 13px; font-size: 39px; line-height: 46.800px; white-space: nowrap; font-feature-settings: "palt"; }
.steps p { margin: 0 0 9.600px; }
.steps b { font-weight: 400; color: #4a63c0; font-family: "Noto Sans CJK JP"; font-size: 34px; line-height: 30px; }
.tight { letter-spacing: -.35px; } .tighter { letter-spacing: -1.1px; } .tightest { letter-spacing: -1.2px; }
.foot { display: flex; align-items: center; height: 24px; margin: 18px 0 0 645px; gap: 16px; font-size: 15.83px; white-space: nowrap; }
.cc { font: bold 12px "Liberation Sans"; } .by { font: bold 12px "Liberation Sans"; fill: #fff; }
```
